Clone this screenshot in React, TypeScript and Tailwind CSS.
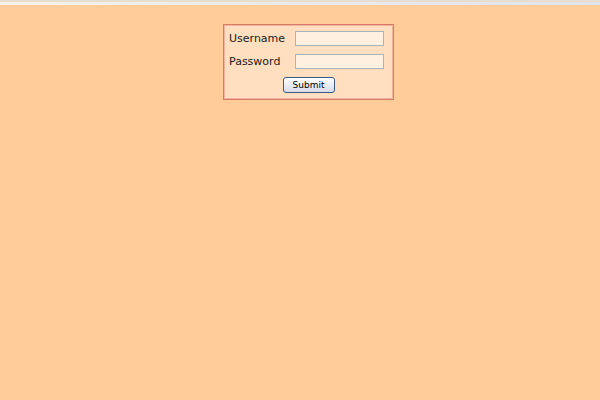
export default function App() {
  return (
    <div className="flex h-[400px] w-[600px] flex-col bg-[#ffcc99] font-['DejaVu_Sans',sans-serif]">
      <div className="h-[2px] w-full bg-[#e6dfcf]" />
      <div className="h-[3px] w-full bg-gradient-to-r from-[#f4f2e8] to-[#e2e2ec]" />
      <div className="flex justify-center pt-[19px]">
        <form className="ml-[17px] flex w-[171px] flex-col border border-[#d97a68] bg-[#ffdfbf] shadow-[inset_0_0_0_1px_#f2b49e] pb-[6px] pl-[5px] pr-[9px] pt-[6px]">
          <div className="flex items-center justify-between">
            <label className="text-[11px] leading-[14px] text-[#1a1a1a]">Username</label>
            <input className="h-[15px] w-[89px] border border-[#a9b5bb] bg-[#fff0df]" />
          </div>
          <div className="mt-[8px] flex items-center justify-between">
            <label className="text-[11px] leading-[14px] text-[#1a1a1a]">Password</label>
            <input type="password" className="h-[15px] w-[89px] border border-[#a9b5bb] bg-[#fff0df]" />
          </div>
          <div className="mt-[8px] flex justify-center pl-[4px]">
            <button
              type="button"
              className="h-[16px] w-[52px] rounded-[3px] border border-[#3c5a84] bg-gradient-to-b from-[#ffffff] to-[#d8dce8] text-[9px] leading-[12px] text-black"
            >
              Submit
            </button>
          </div>
        </form>
      </div>
    </div>
  );
}
